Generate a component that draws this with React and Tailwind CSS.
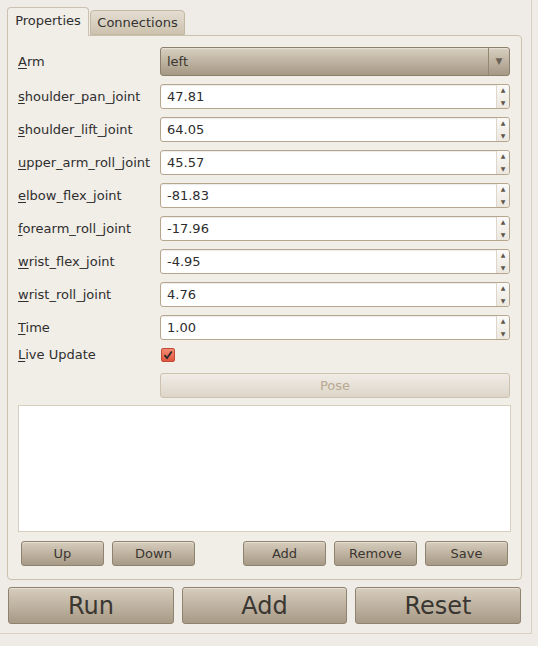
import React, { useState } from 'react';

const JOINTS = [
  ['shoulder_pan_joint', '47.81'],
  ['shoulder_lift_joint', '64.05'],
  ['upper_arm_roll_joint', '45.57'],
  ['elbow_flex_joint', '-81.83'],
  ['forearm_roll_joint', '-17.96'],
  ['wrist_flex_joint', '-4.95'],
  ['wrist_roll_joint', '4.76'],
  ['Time', '1.00'],
];

const FONT = { fontFamily: '"DejaVu Sans", "Liberation Sans", sans-serif' };

// first letter underlined, like a Qt mnemonic
function Mnemonic({ text }) {
  return (
    <span>
      <span className="underline underline-offset-2">{text[0]}</span>
      {text.slice(1)}
    </span>
  );
}

function SpinBox({ value }) {
  return (
    <div className="flex h-[25px] w-[350px] rounded-[3px] border border-[#b6a68c] bg-white shadow-[inset_0_1px_1px_rgba(0,0,0,0.08)]">
      <div className="flex flex-1 items-center pl-[6px] text-[13px] text-[#2e2e2e]">{value}</div>
      <div className="flex w-[13px] flex-col items-center justify-between rounded-r-[3px] border-l border-[#ddd6ca] bg-gradient-to-b from-[#fbfaf8] to-[#ece7df] py-[2px] text-[6px] leading-none text-[#5f574c]">
        <span>▲</span>
        <span>▼</span>
      </div>
    </div>
  );
}

function Button({ children, className = '' }) {
  return (
    <button
      className={`flex items-center justify-center rounded-[3px] border border-[#8f826e] bg-gradient-to-b from-[#d7cdbd] to-[#a79a86] text-[#3a3631] shadow-[inset_0_1px_0_rgba(255,255,255,0.35)] ${className}`}
    >
      {children}
    </button>
  );
}

export default function App() {
  const [live, setLive] = useState(true);

  return (
    <div className="h-[646px] w-[538px] overflow-hidden bg-[#efebe6] text-[13px] text-[#2f2f2f]" style={FONT}>
      <div className="h-[634px] w-[532px] border-b border-r border-[#d9d1c3] pl-[7px] pt-[7px]">
        {/* tab bar */}
        <div className="flex h-[29px] items-end">
          <div className="relative z-10 flex h-[29px] w-[82px] items-center justify-center rounded-t-[4px] border border-b-0 border-[#cbc1af] bg-[#f1ede7] pb-[2px] text-[#2f2f2f]">
            Properties
          </div>
          <div className="mb-[1px] ml-[1px] flex h-[25px] w-[95px] items-center justify-center rounded-t-[4px] border border-[#c3b8a4] bg-gradient-to-b from-[#e4ddd1] to-[#cdc2ae] text-[#333]">
            Connections
          </div>
        </div>

        {/* tab page */}
        <div className="-mt-[1px] h-[545px] w-[515px] rounded-b-[4px] rounded-tr-[4px] border border-[#cbc1af] bg-[#f1ede7] px-[10px] pt-[11px]">
          <div className="flex h-[29px] items-center">
            <div className="w-[142px]">
              <Mnemonic text="Arm" />
            </div>
            <div className="flex h-[29px] w-[350px] rounded-[3px] border border-[#8c7f6b] bg-gradient-to-b from-[#d9d0c1] to-[#a59884] shadow-[inset_0_1px_0_rgba(255,255,255,0.35)]">
              <div className="flex flex-1 items-center pl-[6px] text-[#3a3631]">left</div>
              <div className="flex w-[21px] items-center justify-center border-l border-[#948772] text-[9px] text-[#6b6358]">▼</div>
            </div>
          </div>

          <div className="mt-[8px] flex flex-col gap-[8px]">
            {JOINTS.map(([name, value]) => (
              <div key={name} className="flex h-[25px] items-center">
                <div className="w-[142px] whitespace-nowrap">
                  <Mnemonic text={name} />
                </div>
                <SpinBox value={value} />
              </div>
            ))}
          </div>

          <div className="flex h-[30px] items-center">
            <div className="w-[143px]">
              <Mnemonic text="Live Update" />
            </div>
            <button
              onClick={() => setLive(!live)}
              className="flex h-[14px] w-[14px] items-center justify-center rounded-[2px] border border-[#c24a35] bg-gradient-to-b from-[#f48b73] to-[#e0553d]"
            >
              {live && (
                <svg width="10" height="10" viewBox="0 0 10 10">
                  <path d="M1.5 5.2 L4 8 L8.8 1.5" fill="none" stroke="#2b2b2b" strokeWidth="1.8" />
                </svg>
              )}
            </button>
          </div>

          <div className="mt-[3px] flex">
            <div className="w-[142px]" />
            <div className="flex h-[25px] w-[350px] items-center justify-center rounded-[3px] border border-[#cdc2b0] bg-gradient-to-b from-[#f0ece6] to-[#ddd5c8] text-[#b8a992]">
              Pose
            </div>
          </div>

          <div className="mt-[7px] h-[127px] w-[493px] border border-[#d6cebf] bg-white" />

          <div className="mt-[9px] flex h-[25px] items-center px-[3px]">
            <Button className="h-[25px] w-[83px]">Up</Button>
            <Button className="ml-[8px] h-[25px] w-[83px]">Down</Button>
            <Button className="ml-[48px] h-[25px] w-[83px]">Add</Button>
            <Button className="ml-[8px] h-[25px] w-[83px]">Remove</Button>
            <Button className="ml-[8px] h-[25px] w-[83px]">Save</Button>
          </div>
        </div>

        {/* main actions */}
        <div className="mt-[7px] flex gap-[8px] pl-[1px]">
          <Button className="h-[37px] w-[166px] text-[24px]">Run</Button>
          <Button className="h-[37px] w-[165px] text-[24px]">Add</Button>
          <Button className="h-[37px] w-[166px] text-[24px]">Reset</Button>
        </div>
      </div>
    </div>
  );
}
